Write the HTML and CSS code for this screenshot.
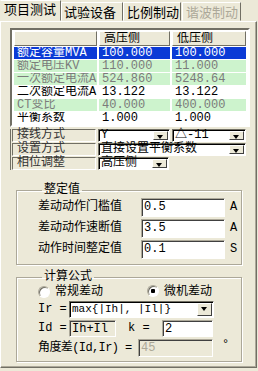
FILE: index.html
```html
<!DOCTYPE html>
<html lang="zh">
<head>
  <meta charset="UTF-8">
  <title>试验设备</title>
  <link rel="stylesheet" href="styles.css">
</head>
<body>
  <div class="tabs">
    <span class="tab tab-first">项目测试</span>
    <span class="tab tab-cur">试验设备</span>
    <span class="tab">比例制动</span>
    <span class="tab tab-off">谐波制动</span>
  </div>

  <div class="panel">
    <table class="grid">
      <colgroup><col class="c1"><col class="c2"><col class="c3"></colgroup>
      <tr class="head"><th></th><th>高压侧</th><th>低压侧</th></tr>
      <tr class="sel"><td>额定容量MVA</td><td>100.000</td><td>100.000</td></tr>
      <tr class="green"><td>额定电压KV</td><td>110.000</td><td>11.000</td></tr>
      <tr class="green"><td>一次额定电流A</td><td>524.860</td><td>5248.64</td></tr>
      <tr><td>二次额定电流A</td><td>13.122</td><td>13.122</td></tr>
      <tr class="green"><td>CT变比</td><td>40.000</td><td>400.000</td></tr>
      <tr><td>平衡系数</td><td>1.000</td><td>1.000</td></tr>
    </table>

    <div class="setup">
      <div class="cap">接线方式</div>
      <div class="combo"><span class="val">Y</span><span class="drop"></span></div>
      <div class="combo"><span class="val">△-11</span><span class="drop"></span></div>

      <div class="cap">设置方式</div>
      <div class="combo wide"><span class="val">直接设置平衡系数</span><span class="drop"></span></div>

      <div class="cap">相位调整</div>
      <div class="combo short"><span class="val">高压侧</span><span class="drop"></span></div>
    </div>

    <fieldset class="group">
      <legend>整定值</legend>
      <div class="setrow">
        <span class="lbl">差动动作门槛值</span>
        <span class="edit">0.5</span>
        <span class="unit">A</span>
      </div>
      <div class="setrow">
        <span class="lbl">差动动作速断值</span>
        <span class="edit">3.5</span>
        <span class="unit">A</span>
      </div>
      <div class="setrow">
        <span class="lbl">动作时间整定值</span>
        <span class="edit">0.1</span>
        <span class="unit">S</span>
      </div>
    </fieldset>

    <fieldset class="group group-calc">
      <legend>计算公式</legend>
      <div class="radios">
        <span class="radio"></span><span class="rlbl">常规差动</span>
        <span class="radio on"></span><span class="rlbl">微机差动</span>
      </div>
      <div class="frow">
        <span class="flbl">Ir =</span>
        <div class="combo formula"><span class="val">max{|Ih|, |Il|}</span><span class="drop"></span></div>
      </div>
      <div class="frow">
        <span class="flbl">Id =</span>
        <span class="edit ro small">Ih+Il</span>
        <span class="klbl">k =</span>
        <span class="edit kval">2</span>
      </div>
      <div class="frow">
        <span class="albl">角度差(Id,Ir) =</span>
        <span class="edit ro dis angle">45</span>
        <span class="deg">°</span>
      </div>
    </fieldset>
  </div>
</body>
</html>
```

FILE: styles.css
```css
body {
  margin: 0;
  width: 258px;
  height: 371px;
  overflow: hidden;
  background: #ece9d8;
  color: #000;
  font: 12px/13px "Liberation Mono", "Noto Sans CJK SC", monospace;
}

/* вкладки */
.tabs {
  display: flex;
  align-items: flex-end;
  height: 21px;
}

.tab {
  box-sizing: border-box;
  height: 19px;
  padding: 1px 0 0 3px;
  border: 1px solid #716f64;
  border-color: #fff #716f64 transparent #fff;
  font: 13px/16px "Noto Sans CJK SC", sans-serif;
}

.tab-first {
  width: 61px;
  height: 21px;
  padding-top: 0;
  border-left-color: transparent;
}

.tab-cur {
  width: 62px;
  padding-left: 2px;
}

.tab:nth-child(3) {
  width: 58px;
}

.tab-off {
  width: 59px;
  margin-left: 1px;
  color: #aca899;
}

.panel {
  box-sizing: border-box;
  height: 347px;
  width: 257px;
  padding: 6px 0 0 9px;
  border: 1px solid #fff;
  border-right-color: #716f64;
  border-bottom-color: #716f64;
  box-shadow: inset -1px -1px 0 #aca899;
}

/* таблица параметров */
.grid {
  table-layout: fixed;
  width: 238px;
  border-collapse: separate;
  border-spacing: 2px 1px;
  border: 2px solid #716f64;
  border-right-color: #fff;
  border-bottom-color: #fff;
  background: #fff;
}

.c1 { width: 83px; }
.c2 { width: 71px; }
.c3 { width: 74px; }

.grid td,
.grid th {
  height: 12px;
  padding: 0 0 0 3px;
  white-space: nowrap;
  overflow: hidden;
  text-align: left;
  font-weight: normal;
  line-height: 12px;
}

.grid th {
  height: 13px;
  background: #ece9d8;
  border: 1px solid #aca899;
  border-color: #fff #716f64 #716f64 #fff;
  padding-left: 4px;
}

.sel td {
  background: #0b3ad6;
  color: #fff;
}

.green td {
  background: #cdf3cd;
  color: #7b7b7b;
}

/* строки выбора */
.setup {
  display: grid;
  grid-template-columns: 84px 72px 74px;
  grid-auto-rows: 13px;
  gap: 1px 2px;
  width: 236px;
  margin-top: 2px;
  padding-left: 1px;
  border-left: 1px solid #716f64;
}

.cap {
  box-sizing: border-box;
  padding-left: 4px;
  border: 1px solid #aca899;
  border-color: #716f64 #fff #fff #716f64;
  line-height: 11px;
  color: #333;
}

.combo {
  box-sizing: border-box;
  display: flex;
  align-items: stretch;
  background: #fff;
  border: 1px solid #716f64;
  border-color: #716f64 #fff #fff #716f64;
  box-shadow: inset 1px 1px 0 #000;
}

.combo .val {
  flex: 1;
  padding-left: 2px;
  line-height: 11px;
  white-space: nowrap;
}

.drop {
  position: relative;
  box-sizing: border-box;
  width: 15px;
  margin: 1px 1px 1px 0;
  background: #ece9d8;
  border: 1px solid #716f64;
  border-color: #fff #404040 #404040 #fff;
}

.drop::after {
  content: "";
  position: absolute;
  left: 3px;
  top: 3px;
  border-left: 3px solid transparent;
  border-right: 3px solid transparent;
  border-top: 4px solid #000;
}

.wide {
  grid-column: span 2;
}

.short {
  width: 71px;
}

/* групповые рамки */
.group {
  box-sizing: border-box;
  width: 226px;
  margin: 14px 0 0 6px;
  padding: 1px 0 5px 21px;
  border: 1px solid #aca899;
  box-shadow: 1px 1px 0 #fff, inset 1px 1px 0 #fff;
}

.group legend {
  margin-left: 4px;
  padding: 0 2px;
  line-height: 13px;
}

.setrow {
  display: flex;
  align-items: center;
  height: 19px;
  margin-bottom: 2px;
}

.setrow:last-child {
  margin-bottom: 0;
}

.lbl {
  width: 103px;
  line-height: 13px;
}

.edit {
  box-sizing: border-box;
  display: block;
  width: 84px;
  height: 19px;
  padding: 2px 0 0 2px;
  background: #fff;
  border: 1px solid #716f64;
  border-color: #aca899 #fff #fff #aca899;
  box-shadow: inset 1px 1px 0 #404040;
  line-height: 12px;
  white-space: nowrap;
}

.unit {
  margin-left: 5px;
}

.group-calc {
  margin-top: 6px;
  padding-bottom: 4px;
}

.radios {
  display: flex;
  align-items: center;
  height: 14px;
}

.radio {
  box-sizing: border-box;
  width: 12px;
  height: 12px;
  border-radius: 50%;
  background: #fff;
  border: 1px solid #aca899;
  border-right-color: #fff;
  border-bottom-color: #fff;
  box-shadow: inset 1px 1px 0 #716f64;
}

.radio.on {
  margin-top: -3px;
  background: radial-gradient(circle, #000 0 2px, #fff 2.5px);
}

.rlbl {
  margin-left: 5px;
  width: 92px;
}

.rlbl:last-child {
  width: auto;
}

.frow {
  display: flex;
  align-items: center;
  margin-top: 2px;
}

.flbl {
  width: 31px;
}

.formula {
  width: 145px;
  height: 17px;
}

.formula .val {
  line-height: 15px;
  font-size: 11px;
}

.small {
  width: 47px;
  height: 17px;
}

.ro {
  background: #ece9d8;
}

.klbl {
  margin-left: 12px;
  width: 34px;
}

.kval {
  width: 51px;
  height: 17px;
}

.albl {
  width: 100px;
  letter-spacing: -0.6px;
}

.angle {
  width: 75px;
  height: 18px;
}

.dis {
  color: #aca899;
}

.deg {
  margin-left: 9px;
  align-self: flex-start;
}
```
